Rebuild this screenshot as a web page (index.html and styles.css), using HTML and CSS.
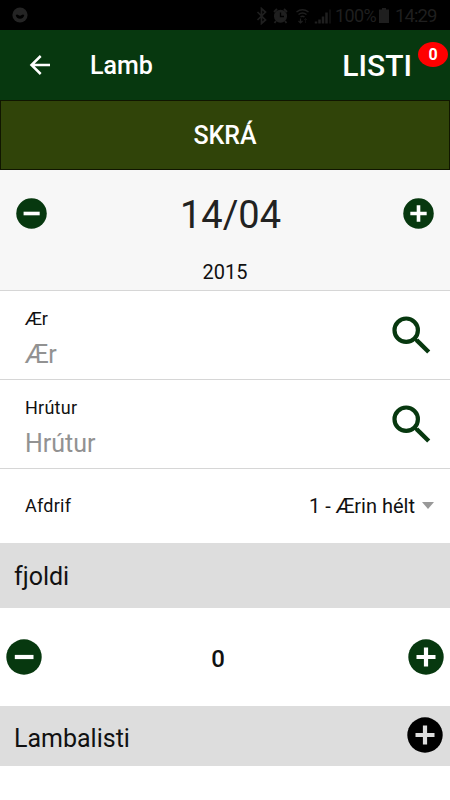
FILE: index.html
```
<!DOCTYPE html>
<html lang="is">
<head>
<meta charset="utf-8">
<title>Lamb</title>
<link rel="stylesheet" href="styles.css">
</head>
<body>
<svg class="defs" width="0" height="0" aria-hidden="true">
  <symbol id="minus" viewBox="0 0 36 36"><circle cx="18" cy="18" r="17.7" fill="currentColor"/><path class="sign" d="M8.800 18h18.700"/></symbol>
  <symbol id="plus" viewBox="0 0 36 36"><circle cx="18" cy="18" r="17.7" fill="currentColor"/><path class="sign" d="M8.500 18h19M18 8.500v19"/></symbol>
  <symbol id="search" viewBox="0 0 40 40"><circle cx="15.200" cy="15.200" r="11.700" fill="none" stroke="currentColor" stroke-width="4.200"/><path d="M23 23l3 3" stroke="currentColor" stroke-width="3"/><path d="M25.600 25.200L37.700 37" stroke="currentColor" stroke-width="4.400"/></symbol>
</svg>
<div class="status">
  <svg class="face" width="16" height="16" viewBox="0 0 16 16"><circle cx="8" cy="8" r="7.600" fill="#242424"/><path d="M3.700 8q1.600-1 2.600 0 1.700 1.500 3.400 0 1-1 2.600 0-.6 3.700-4.300 3.700T3.700 8z" fill="#000"/></svg>
  <div class="indicators">
    <svg width="76" height="18" viewBox="0 0 76 18" fill="none" stroke="currentColor">
      <path d="M1.500 5l8 8-4 3.500v-15l4 3.500-8 8" stroke-width="1.700"/>
      <circle cx="24.500" cy="9.200" r="6.500" fill="currentColor" stroke="none"/>
      <path d="M18 5l3-3M31 5l-3-3M20 14l-1.500 2M29 14l1.500 2" stroke-width="1.800"/>
      <path d="M24.500 5.500v4h3.500" stroke="#000" stroke-width="1.300"/>
      <path d="M40.500 5q6-4.500 12 0M42.500 7.500q4-3 8 0M44.500 10q2-1.500 4 0" stroke-width="1.500"/>
      <path d="M44.500 11.500v4.500m-2-2l2 2 2-2" stroke-width="1.200"/><path d="M49.500 16v-4.500m-1.500 1.500l1.500-1.500 1.500 1.500" stroke-width=".8" opacity=".6"/>
      <path d="M60 16.500v-2M63.500 16.500v-4M67 16.500v-7M70.500 16.500v-11" stroke-width="2.500"/><path d="M74 16.500v-14" stroke-width="1.800" opacity=".5"/>
    </svg>
    <span class="percent">100%</span>
    <svg class="battery" width="10" height="15" viewBox="0 0 10 15"><path d="M3 0h4v1.500h3V15H0V1.500h3z" fill="currentColor"/></svg>
    <span class="clock">14:29</span>
  </div>
</div>
<header class="appbar">
  <svg class="back" width="22" height="22" viewBox="0 0 22 22"><path d="M22 11H3.500M12.700 2L3.500 11l9.200 9" fill="none" stroke="#fff" stroke-width="2.500"/></svg>
  <h1 class="title">Lamb</h1>
  <div class="list-link">LISTI<span class="badge">0</span></div>
</header>
<button class="register">SKRÁ</button>
<section class="date">
  <div class="date-row">
    <svg class="step small"><use href="#minus"/></svg>
    <span class="day">14/04</span>
    <svg class="step small"><use href="#plus"/></svg>
  </div>
  <div class="year">2015</div>
</section>
<div class="field">
  <div><div class="label">Ær</div><div class="hint">Ær</div></div>
  <svg class="search"><use href="#search"/></svg>
</div>
<div class="field">
  <div><div class="label wide">Hrútur</div><div class="hint">Hrútur</div></div>
  <svg class="search"><use href="#search"/></svg>
</div>
<div class="fate">
  <span class="label wide">Afdrif</span>
  <span class="choice">1 - Ærin hélt</span>
  <span class="caret"></span>
</div>
<div class="heading count-heading">fjoldi</div>
<div class="counter">
  <svg class="step"><use href="#minus"/></svg>
  <span class="count">0</span>
  <svg class="step"><use href="#plus"/></svg>
</div>
<div class="heading list-heading"><span class="list-title">Lambalisti</span><svg class="step add"><use href="#plus"/></svg></div>
</body>
</html>
```
FILE: styles.css
```
* { box-sizing: border-box; }
body { margin: 0; width: 450px; height: 800px; overflow: hidden; background: #fff; color: #111; font-family: Roboto, sans-serif; --sign: #fff; }
.defs { position: absolute; }
svg { display: block; flex: none; }
.status { height: 30px; background: #000; color: #1f1f1f; display: flex; align-items: center; justify-content: space-between; padding: 0 14px 0 12px; }
.indicators { display: flex; align-items: center; font-size: 19px; line-height: 30px; padding-top: 1px; }
.percent { width: 39px; margin-left: 3px; font-size: 18px; letter-spacing: -0.6px; white-space: nowrap; }
.battery { margin: 0 6px 0 5px; }
.clock { width: 41px; font-size: 18.5px; letter-spacing: -0.9px; }
.appbar { height: 70px; background: #07380f; color: #fff; display: flex; align-items: center; padding-left: 28px; }
.title { margin: 0 0 0 40px; padding-top: 1px; font-size: 25px; font-weight: 500; line-height: 30px; }
.list-link { position: relative; margin-left: auto; padding: 2px 38px 0 0; font-size: 30px; font-weight: 500; line-height: 70px; }
.badge { position: absolute; right: 2px; top: 13px; width: 30px; height: 25px; border-radius: 50%; background: #f00; font-size: 16px; font-weight: 700; line-height: 25px; text-align: center; }
.register { display: block; width: 450px; height: 70px; padding: 2px 0 0; border: 1px solid #101600; background: #304409; color: #fff; font: 500 25px/66px Roboto, sans-serif; text-align: center; }
.date { height: 121px; background: #f7f7f7; border-bottom: 1px solid #d6d6d6; }
.date-row { height: 88px; padding: 0 16px; display: flex; align-items: center; justify-content: space-between; }
.step { width: 36px; height: 36px; color: #07380f; }
.sign { stroke: var(--sign); stroke-width: 4.200; }
.small { width: 31px; height: 31px; margin-top: -1px; }
.day { padding: 2px 0 0 11px; font-size: 38px; line-height: 44px; color: #222; }
.year { font-size: 20px; line-height: 28px; text-align: center; }
.field { height: 89px; padding: 17px 19px 0 25px; border-bottom: 1px solid #d6d6d6; display: flex; justify-content: space-between; }
.label { font-size: 18px; line-height: 22px; }
.wide { letter-spacing: 0.25px; }
.hint { margin-top: 8px; font-size: 25px; line-height: 34px; color: #929292; }
.search { width: 40px; height: 40px; margin-top: 7px; color: #07380f; }
.fate { height: 74px; display: flex; align-items: center; padding: 0 16px 0 25px; }
.choice { margin-left: auto; font-size: 20px; line-height: 24px; }
.caret { margin-left: 7px; margin-top: -2px; border: 6px solid transparent; border-top: 7px solid #999; border-bottom: 0; }
.heading { background: #ddd; font-size: 25px; padding-left: 14px; }
.count-heading { height: 65px; line-height: 68px; }
.counter { height: 98px; display: flex; align-items: center; justify-content: space-between; padding: 0 6px; }
.count { font-size: 24px; font-weight: 500; padding: 3px 14px 0 0; }
.list-heading { height: 60px; display: flex; align-items: center; justify-content: space-between; padding-right: 7px; }
.list-title { padding-top: 4px; }
.add { color: #000; margin-bottom: 2px; --sign: #ddd; }
```
